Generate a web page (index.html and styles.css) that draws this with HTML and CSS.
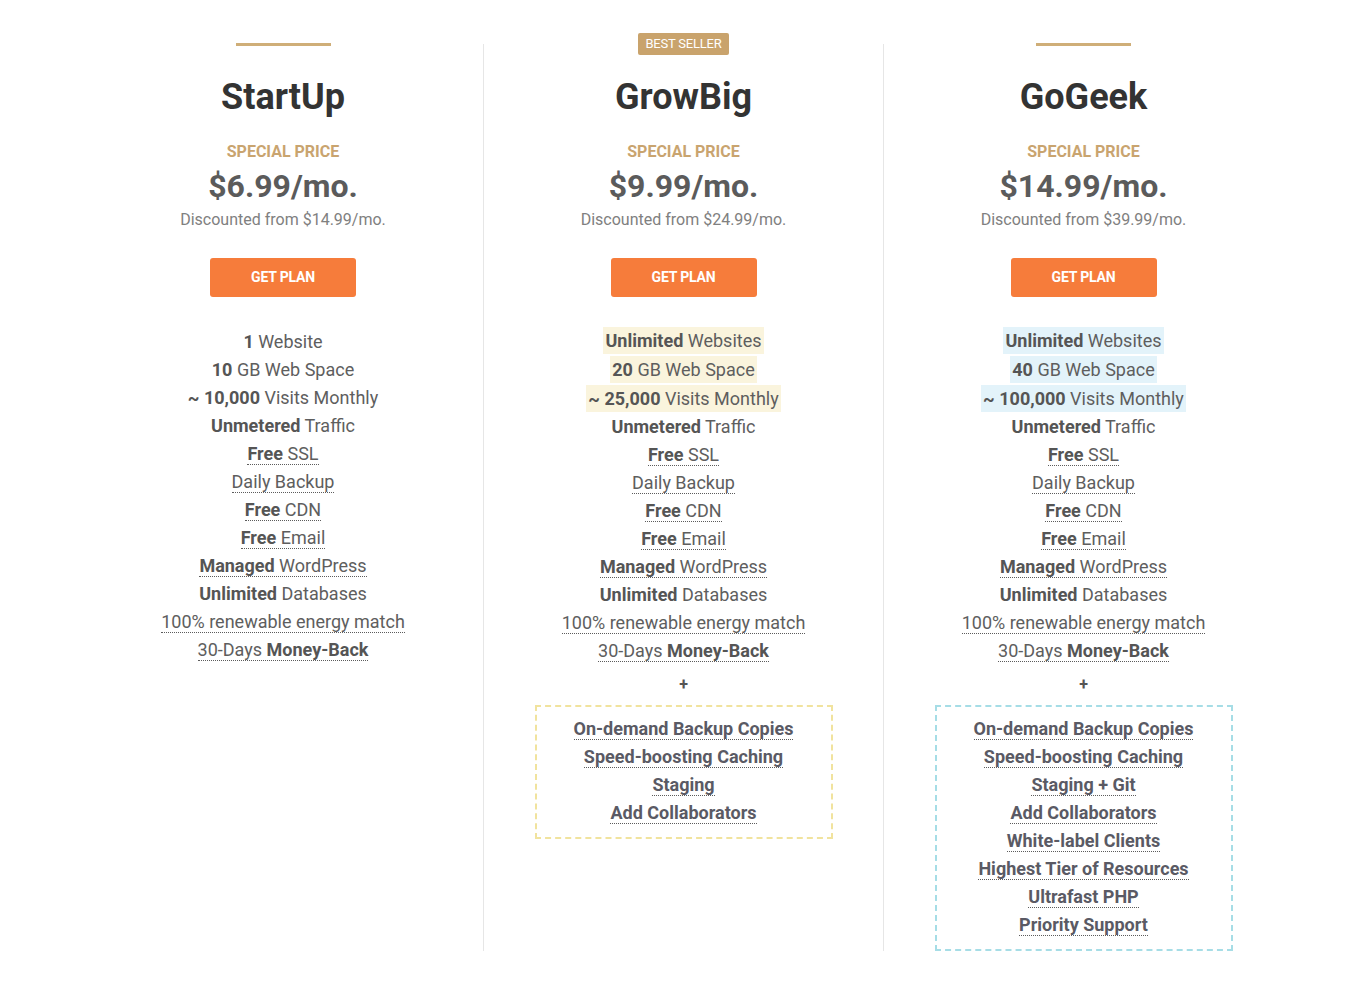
FILE: index.html
```html
<!DOCTYPE html>
<html lang="en">
<head>
<meta charset="utf-8">
<title>Plans</title>
<link rel="stylesheet" href="styles.css">
</head>
<body>
<div class="plans">
  <section class="plan">
    <div class="top"><span class="bar"></span></div>
    <h2 class="name">StartUp</h2>
    <div class="special">SPECIAL PRICE</div>
    <div class="price">$6.99/mo.</div>
    <div class="disc">Discounted from $14.99/mo.</div>
    <a class="btn">GET PLAN</a>
    <ul class="features">
      <li><span><b>1</b> Website</span></li>
      <li><span><b>10</b> GB Web Space</span></li>
      <li><span><b>~ 10,000</b> Visits Monthly</span></li>
      <li><span><b>Unmetered</b> Traffic</span></li>
      <li><span class="tip"><b>Free</b> SSL</span></li>
      <li><span class="tip">Daily Backup</span></li>
      <li><span class="tip"><b>Free</b> CDN</span></li>
      <li><span class="tip"><b>Free</b> Email</span></li>
      <li><span class="tip"><b>Managed</b> WordPress</span></li>
      <li><span><b>Unlimited</b> Databases</span></li>
      <li><span class="tip">100% renewable energy match</span></li>
      <li><span class="tip">30-Days <b>Money-Back</b></span></li>
    </ul>
  </section>

  <section class="plan">
    <div class="top"><span class="badge">BEST SELLER</span></div>
    <h2 class="name">GrowBig</h2>
    <div class="special">SPECIAL PRICE</div>
    <div class="price">$9.99/mo.</div>
    <div class="disc">Discounted from $24.99/mo.</div>
    <a class="btn">GET PLAN</a>
    <ul class="features features-hl">
      <li><span class="hl-gold"><b>Unlimited</b> Websites</span></li>
      <li><span class="hl-gold"><b>20</b> GB Web Space</span></li>
      <li><span class="hl-gold"><b>~ 25,000</b> Visits Monthly</span></li>
      <li><span><b>Unmetered</b> Traffic</span></li>
      <li><span class="tip"><b>Free</b> SSL</span></li>
      <li><span class="tip">Daily Backup</span></li>
      <li><span class="tip"><b>Free</b> CDN</span></li>
      <li><span class="tip"><b>Free</b> Email</span></li>
      <li><span class="tip"><b>Managed</b> WordPress</span></li>
      <li><span><b>Unlimited</b> Databases</span></li>
      <li><span class="tip">100% renewable energy match</span></li>
      <li><span class="tip">30-Days <b>Money-Back</b></span></li>
    </ul>
    <div class="plus">+</div>
    <ul class="extras extras-gold">
      <li><span class="tip">On-demand Backup Copies</span></li>
      <li><span class="tip">Speed-boosting Caching</span></li>
      <li><span class="tip">Staging</span></li>
      <li><span class="tip">Add Collaborators</span></li>
    </ul>
  </section>

  <section class="plan">
    <div class="top"><span class="bar"></span></div>
    <h2 class="name">GoGeek</h2>
    <div class="special">SPECIAL PRICE</div>
    <div class="price">$14.99/mo.</div>
    <div class="disc">Discounted from $39.99/mo.</div>
    <a class="btn">GET PLAN</a>
    <ul class="features features-hl">
      <li><span class="hl-blue"><b>Unlimited</b> Websites</span></li>
      <li><span class="hl-blue"><b>40</b> GB Web Space</span></li>
      <li><span class="hl-blue"><b>~ 100,000</b> Visits Monthly</span></li>
      <li><span><b>Unmetered</b> Traffic</span></li>
      <li><span class="tip"><b>Free</b> SSL</span></li>
      <li><span class="tip">Daily Backup</span></li>
      <li><span class="tip"><b>Free</b> CDN</span></li>
      <li><span class="tip"><b>Free</b> Email</span></li>
      <li><span class="tip"><b>Managed</b> WordPress</span></li>
      <li><span><b>Unlimited</b> Databases</span></li>
      <li><span class="tip">100% renewable energy match</span></li>
      <li><span class="tip">30-Days <b>Money-Back</b></span></li>
    </ul>
    <div class="plus">+</div>
    <ul class="extras extras-blue">
      <li><span class="tip">On-demand Backup Copies</span></li>
      <li><span class="tip">Speed-boosting Caching</span></li>
      <li><span class="tip">Staging + Git</span></li>
      <li><span class="tip">Add Collaborators</span></li>
      <li><span class="tip">White-label Clients</span></li>
      <li><span class="tip">Highest Tier of Resources</span></li>
      <li><span class="tip">Ultrafast PHP</span></li>
      <li><span class="tip">Priority Support</span></li>
    </ul>
  </section>
</div>
</body>
</html>
```

FILE: styles.css
```css
* { box-sizing: border-box; }

html, body {
  margin: 0;
  padding: 0;
  background: #fff;
}

body {
  font-family: Roboto, "Liberation Sans", Arial, sans-serif;
  color: #5e5e5e;
  padding-top: 44px;
}

.plans {
  width: 1200px;
  margin: 0 auto;
  display: grid;
  grid-template-columns: repeat(3, 400px);
}

.plan {
  display: flex;
  flex-direction: column;
  align-items: center;
  text-align: center;
}

.plan + .plan {
  border-left: 1px solid #e6e6e6;
}

.top {
  height: 3px;
  margin-top: -1px;
  display: flex;
  align-items: center;
  justify-content: center;
}

.bar {
  display: block;
  width: 95px;
  height: 3px;
  background: #cfae78;
}

.badge {
  display: block;
  height: 22px;
  line-height: 22px;
  padding: 0 7px;
  margin-top: -2px;
  background: #c9a36c;
  color: #fff;
  font-size: 13px;
  border-radius: 2px;
  letter-spacing: -0.2px;
}

.name {
  margin: 29px 0 0;
  font-size: 36px;
  line-height: 44px;
  font-weight: 700;
  color: #333333;
}

.special {
  margin-top: 23px;
  font-size: 16px;
  line-height: 20px;
  font-weight: 700;
  color: #c9a46f;
}

.price {
  margin-top: 6px;
  font-size: 32px;
  line-height: 36px;
  font-weight: 700;
  color: #5b5b5b;
}

.disc {
  margin-top: 6px;
  font-size: 16px;
  line-height: 20px;
  color: #808080;
}

.btn {
  margin-top: 28px;
  width: 146px;
  height: 39px;
  line-height: 39px;
  background: #f67c3b;
  color: #fff;
  font-size: 14px;
  font-weight: 700;
  border-radius: 3px;
  letter-spacing: -0.2px;
}

.features,
.extras {
  list-style: none;
  margin: 0;
  padding: 0;
  font-size: 18px;
  line-height: 28px;
}

.features {
  margin-top: 31px;
}

.features-hl {
  margin-top: 29px;
}

.features-hl li:nth-child(-n+3) {
  line-height: 29px;
}

.features b {
  font-weight: 700;
  color: #555;
}

.tip {
  border-bottom: 1px dotted #5c5c5c;
}

.hl-gold,
.hl-blue {
  padding: 3px 2px;
}

.hl-gold { background: #faf4dd; }
.hl-blue { background: #e3f3fa; }

.plus {
  margin-top: 10px;
  font-size: 16px;
  line-height: 20px;
  font-weight: 700;
  color: #555;
}

.extras {
  margin-top: 10px;
  width: 298px;
  padding: 8px 0 10px;
  font-weight: 700;
  color: #5a5a64;
}

.extras-gold { border: 2px dashed #f1e39e; }
.extras-blue { border: 2px dashed #a6dde6; }
```
